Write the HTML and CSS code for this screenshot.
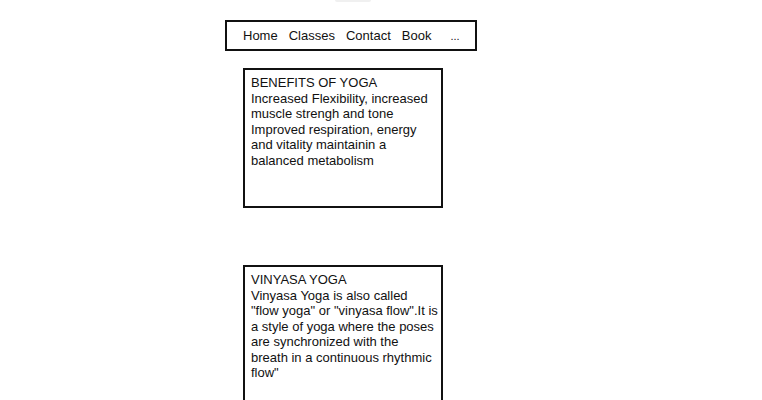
FILE: index.html
```html
<!DOCTYPE html>
<html>
<head>
<meta charset="utf-8">
<link rel="stylesheet" href="styles.css">
</head>
<body>
<div class="page">
  <div class="logo-stub"></div>
  <nav class="nav">
    <a class="nav-item">Home</a>
    <a class="nav-item">Classes</a>
    <a class="nav-item">Contact</a>
    <a class="nav-item">Book</a>
    <a class="nav-item more">...</a>
  </nav>
  <section class="card">
    <div class="card-title">BENEFITS OF YOGA</div>
    <p class="card-text">Increased Flexibility, increased<br>muscle strengh and tone<br>Improved respiration, energy<br>and vitality maintainin a<br>balanced metabolism</p>
  </section>
  <section class="card">
    <div class="card-title">VINYASA YOGA</div>
    <p class="card-text">Vinyasa Yoga is also called<br>"flow yoga" or "vinyasa flow".It is<br>a style of yoga where the poses<br>are synchronized with the<br>breath in a continuous rhythmic<br>flow"</p>
  </section>
</div>
</body>
</html>
```
FILE: styles.css
```css
html, body {
  margin: 0;
  padding: 0;
  background: #ffffff;
}
body {
  font-family: "Liberation Sans", Arial, sans-serif;
  font-size: 13px;
  color: #111111;
  overflow: hidden;
  height: 400px;
}
.page {
  display: flex;
  flex-direction: column;
  align-items: flex-start;
  padding-left: 225px;
}
.logo-stub {
  width: 36px;
  height: 2px;
  margin-left: 110px;
  background: #f0f0f0;
  border-radius: 0 0 6px 6px;
  margin-bottom: 18px;
}
.nav {
  box-sizing: border-box;
  width: 252px;
  height: 31px;
  border: 2px solid #111;
  display: flex;
  align-items: center;
  padding-left: 16px;
  gap: 11px;
}
.nav-item {
  color: #111;
  text-decoration: none;
  font-size: 13px;
}
.nav-item.more {
  margin-left: 8px;
  font-size: 11px;
}
.card {
  box-sizing: border-box;
  width: 200px;
  height: 140px;
  margin-left: 18px;
  margin-top: 17px;
  border: 2px solid #111;
  padding: 5px 0 5px 6px;
}
.card + .card {
  margin-top: 57px;
}
.card-title {
  font-size: 13px;
  line-height: 15.5px;
}
.card-text {
  margin: 0;
  font-size: 13px;
  line-height: 15.6px;
  white-space: nowrap;
}
```
